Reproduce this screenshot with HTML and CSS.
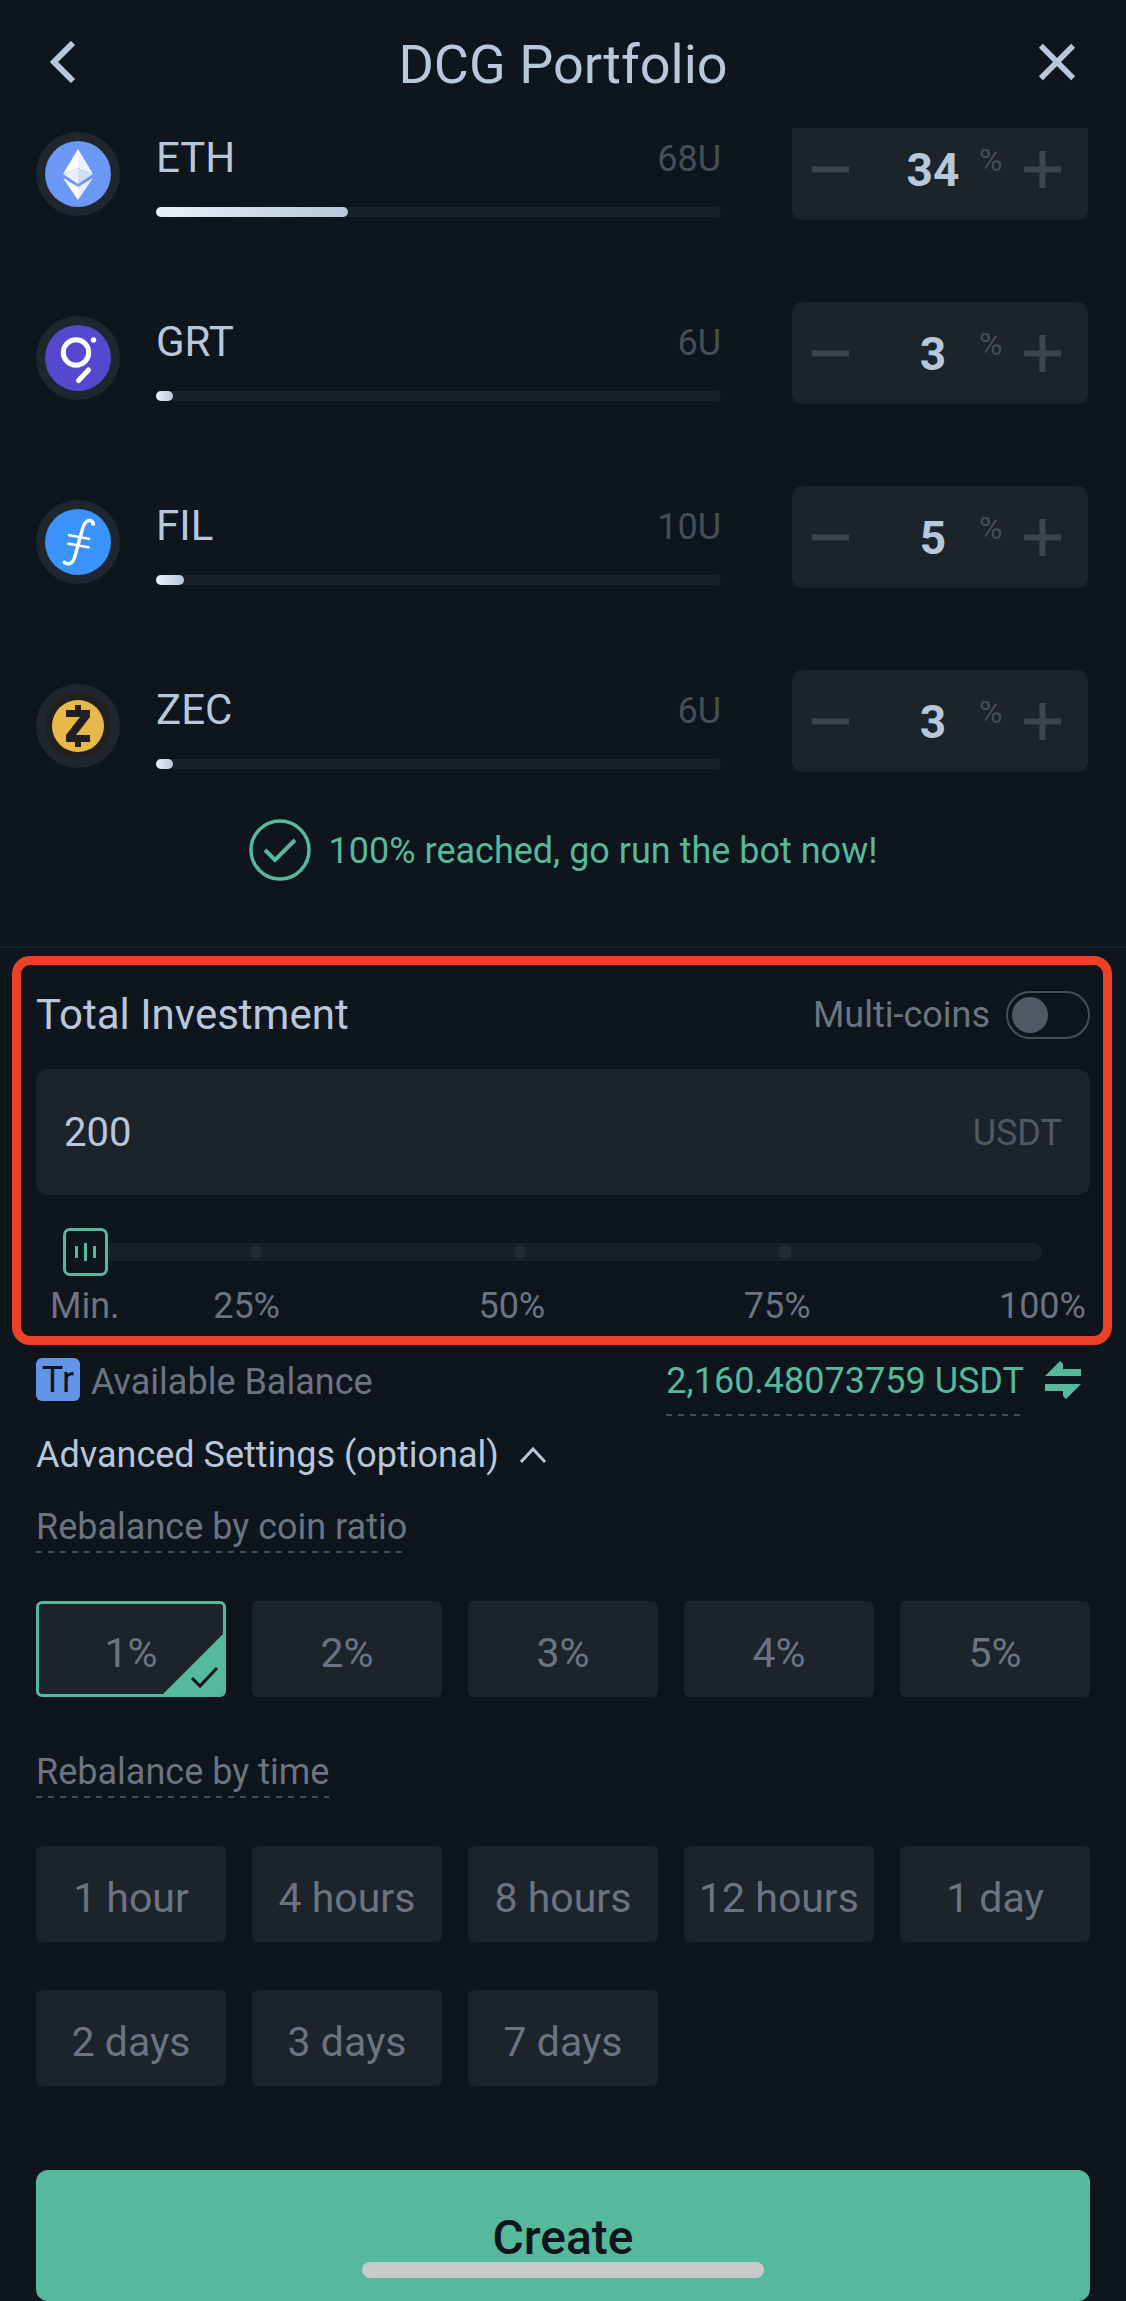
FILE: index.html
```html
<!DOCTYPE html>
<html lang="en">
<head>
  <meta charset="UTF-8" />
  <meta name="viewport" content="width=device-width, initial-scale=1.0"/>
  <title>DCG Portfolio</title>
  <link rel="stylesheet" href="styles.css">
</head>
<body>
  <header class="header">
    <button type="button" class="icon-btn" aria-label="Back">
      <svg width="26" height="42" viewBox="0 0 26 42"><path d="M23 2L4 21l19 19" fill="none" stroke="currentColor" stroke-width="6"/></svg>
    </button>
    <h1>DCG Portfolio</h1>
    <button type="button" class="icon-btn" aria-label="Close">
      <svg width="38" height="38" viewBox="0 0 40 40"><path d="M3 3l34 34M37 3L3 37" fill="none" stroke="currentColor" stroke-width="6"/></svg>
    </button>
  </header>

  <main>
    <div class="coins">
      <ul class="coin-list">
        <li class="coin">
          <svg class="coin-icon" viewBox="0 0 84 84">
            <circle cx="42" cy="42" r="42" fill="#20262d"/>
            <circle cx="42" cy="42" r="33" fill="#6b97f7"/>
            <path d="M42 17L27 42l15-6z" fill="#fff"/>
            <path d="M42 17l15 25-15-6z" fill="#eef2fc"/>
            <path d="M27 42l15-6v16z" fill="#e9effb"/>
            <path d="M57 42l-15-6v16z" fill="#d5deee"/>
            <path d="M27 46l15 9v13z" fill="#fff"/>
            <path d="M57 46l-15 9v13z" fill="#e9effb"/>
          </svg>
          <div class="coin-info">
            <div class="coin-text"><span class="coin-name">ETH</span><span class="coin-amount">68U</span></div>
            <div class="bar"><div class="bar-fill" style="width: 34%"></div></div>
          </div>
          <div class="stepper">
            <button type="button" class="minus" aria-label="Decrease ETH"><svg width="37" height="37" viewBox="0 0 37 37"><path d="M0 18.5h37" stroke="currentColor" stroke-width="6"/></svg></button>
            <input type="text" value="34" aria-label="ETH percent">
            <span class="unit">%</span>
            <button type="button" class="plus" aria-label="Increase ETH"><svg width="37" height="37" viewBox="0 0 37 37"><path d="M0 18.5h37M18.5 0v37" stroke="currentColor" stroke-width="6"/></svg></button>
          </div>
        </li>
        <li class="coin">
          <svg class="coin-icon" viewBox="0 0 84 84">
            <circle cx="42" cy="42" r="42" fill="#20262d"/>
            <circle cx="42" cy="42" r="33" fill="#5548ce"/>
            <circle cx="40" cy="36.500" r="12.700" fill="none" stroke="#fff" stroke-width="5"/>
            <circle cx="57.500" cy="24" r="2.700" fill="#fff"/>
            <path d="M52.500 54L42.500 64.500" stroke="#fff" stroke-width="5" stroke-linecap="round"/>
          </svg>
          <div class="coin-info">
            <div class="coin-text"><span class="coin-name">GRT</span><span class="coin-amount">6U</span></div>
            <div class="bar"><div class="bar-fill" style="width: 3%"></div></div>
          </div>
          <div class="stepper">
            <button type="button" class="minus" aria-label="Decrease GRT"><svg width="37" height="37" viewBox="0 0 37 37"><path d="M0 18.5h37" stroke="currentColor" stroke-width="6"/></svg></button>
            <input type="text" value="3" aria-label="GRT percent">
            <span class="unit">%</span>
            <button type="button" class="plus" aria-label="Increase GRT"><svg width="37" height="37" viewBox="0 0 37 37"><path d="M0 18.5h37M18.5 0v37" stroke="currentColor" stroke-width="6"/></svg></button>
          </div>
        </li>
        <li class="coin">
          <svg class="coin-icon" viewBox="0 0 84 84">
            <circle cx="42" cy="42" r="42" fill="#20262d"/>
            <circle cx="42" cy="42" r="33" fill="#3a93fa"/>
            <g fill="none" stroke="#fff" stroke-linecap="round">
              <path d="M57.500 24C56 18.500 49 19 46.500 29L39 56c-2 7.500-7 9.500-10.500 6.500" stroke-width="3.400"/>
              <path d="M32 35l22 4M31.500 43.500l22 4" stroke-width="2.600" stroke-linecap="butt"/>
            </g>
            <circle cx="57" cy="23.500" r="2" fill="#fff"/>
            <circle cx="28.500" cy="62.500" r="2" fill="#fff"/>
          </svg>
          <div class="coin-info">
            <div class="coin-text"><span class="coin-name">FIL</span><span class="coin-amount">10U</span></div>
            <div class="bar"><div class="bar-fill" style="width: 5%"></div></div>
          </div>
          <div class="stepper">
            <button type="button" class="minus" aria-label="Decrease FIL"><svg width="37" height="37" viewBox="0 0 37 37"><path d="M0 18.5h37" stroke="currentColor" stroke-width="6"/></svg></button>
            <input type="text" value="5" aria-label="FIL percent">
            <span class="unit">%</span>
            <button type="button" class="plus" aria-label="Increase FIL"><svg width="37" height="37" viewBox="0 0 37 37"><path d="M0 18.5h37M18.5 0v37" stroke="currentColor" stroke-width="6"/></svg></button>
          </div>
        </li>
        <li class="coin">
          <svg class="coin-icon" viewBox="0 0 84 84">
            <circle cx="42" cy="42" r="42" fill="#20262d"/>
            <circle cx="42" cy="42" r="33" fill="#221f20"/>
            <circle cx="42" cy="42" r="26" fill="#e9b84a"/>
            <path d="M39 21h6v5h9v7L40 51h14v7h-9v5h-6v-5h-9v-7l14-18H30v-7h9z" fill="#221f20"/>
          </svg>
          <div class="coin-info">
            <div class="coin-text"><span class="coin-name">ZEC</span><span class="coin-amount">6U</span></div>
            <div class="bar"><div class="bar-fill" style="width: 3%"></div></div>
          </div>
          <div class="stepper">
            <button type="button" class="minus" aria-label="Decrease ZEC"><svg width="37" height="37" viewBox="0 0 37 37"><path d="M0 18.5h37" stroke="currentColor" stroke-width="6"/></svg></button>
            <input type="text" value="3" aria-label="ZEC percent">
            <span class="unit">%</span>
            <button type="button" class="plus" aria-label="Increase ZEC"><svg width="37" height="37" viewBox="0 0 37 37"><path d="M0 18.5h37M18.5 0v37" stroke="currentColor" stroke-width="6"/></svg></button>
          </div>
        </li>
      </ul>
    </div>

    <div class="status">
      <svg width="62" height="62" viewBox="0 0 62 62" fill="none" stroke="currentColor">
        <circle cx="31" cy="31" r="29" stroke-width="3.500"/>
        <path d="M16 31l10 10 20-20" stroke-width="4"/>
      </svg>
      <span>100% reached, go run the bot now!</span>
    </div>

    <section class="invest">
      <div class="invest-head">
        <label for="amount">Total Investment</label>
        <label class="multi">Multi-coins <input type="checkbox" class="toggle"></label>
      </div>
      <div class="amount-box">
        <input type="text" id="amount" value="200">
        <span>USDT</span>
      </div>
      <input type="range" class="slider" min="0" max="100" value="0" aria-label="Share of balance">
      <div class="slider-labels">
        <span>Min.</span><span>25%</span><span>50%</span><span>75%</span><span>100%</span>
      </div>
    </section>

    <section class="settings">
      <div class="balance">
        <span class="badge">Tr</span>
        <span class="balance-label">Available Balance</span>
        <span class="balance-value dashed">2,160.48073759 USDT</span>
        <button type="button" class="swap" aria-label="Transfer">
          <svg width="36" height="38" viewBox="0 0 36 38" fill="currentColor"><path d="M0 15L15 0l3 3v5h18v7zM36 23L21 38l-3-3v-5H0v-7z"/></svg>
        </button>
      </div>

      <button type="button" class="advanced">Advanced Settings (optional)
        <svg width="28" height="18" viewBox="0 0 28 18"><path d="M2 16L14 3l12 13" fill="none" stroke="currentColor" stroke-width="3"/></svg>
      </button>

      <h2 class="dashed">Rebalance by coin ratio</h2>
      <div class="chips">
        <button type="button" class="chip selected" aria-pressed="true">1%
          <svg class="corner" width="60" height="60" viewBox="0 0 60 60"><path d="M60 0v60H0z" fill="#56b99b"/><path d="M29 44l8 8 17-18" fill="none" stroke="#0e151c" stroke-width="3"/></svg>
        </button>
        <button type="button" class="chip">2%</button>
        <button type="button" class="chip">3%</button>
        <button type="button" class="chip">4%</button>
        <button type="button" class="chip">5%</button>
      </div>

      <h2 class="dashed by-time">Rebalance by time</h2>
      <div class="chips">
        <button type="button" class="chip">1 hour</button>
        <button type="button" class="chip">4 hours</button>
        <button type="button" class="chip">8 hours</button>
        <button type="button" class="chip">12 hours</button>
        <button type="button" class="chip">1 day</button>
        <button type="button" class="chip">2 days</button>
        <button type="button" class="chip">3 days</button>
        <button type="button" class="chip">7 days</button>
      </div>

      <button type="submit" class="create">Create</button>
    </section>
  </main>
  <div class="home-bar"></div>
</body>
</html>
```
FILE: styles.css
```css
* { box-sizing: border-box; }
body { margin: 0; background: #0e151c; color: #b9c7da; font-family: Roboto, sans-serif; font-size: 36px; line-height: 44px; }
button, input { font: inherit; color: inherit; background: none; border: 0; padding: 0; margin: 0; }
button { cursor: pointer; }
svg { display: block; flex: none; }
h1, h2, ul { margin: 0; padding: 0; font-weight: 400; }

.header { display: flex; align-items: center; justify-content: space-between; height: 128px; padding: 0 50px; }
.header h1 { padding-top: 2px; font-size: 54px; line-height: 60px; }
.icon-btn { width: 38px; padding-bottom: 4px; }

/* coins */
.coins { overflow: hidden; }
.coin-list { display: grid; gap: 82px; margin-top: -10px; list-style: none; }
.coin { display: grid; grid-template-columns: 84px 1fr 296px; height: 102px; padding: 0 38px 0 36px; }
.coin-icon, .coin-info { margin-top: 14px; }
.coin-icon { width: 84px; height: 84px; }
.coin-info { padding: 0 71px 0 36px; }
.coin-text { display: flex; justify-content: space-between; padding-top: 2px; margin-bottom: 25px; line-height: 48px; }
.coin-name { font-size: 42px; }
.coin-amount { padding-top: 2px; line-height: 46px; color: #464e57; }
.bar { height: 10px; border-radius: 5px; background: #192028; }
.bar-fill { height: 10px; border-radius: 5px; background: linear-gradient(90deg, #eaf0f7, #b9c7da); }
.stepper { display: flex; align-items: center; border-radius: 10px; background: #1c232b; color: #3d464f; }
.stepper input { flex: 1; min-width: 0; padding-top: 2px; color: #b9c7da; font-size: 46px; font-weight: 700; text-align: center; }
.stepper .minus { width: 95px; padding-left: 20px; }
.stepper .plus { width: 85px; padding-left: 21px; }
.unit { width: 24px; padding-bottom: 18px; font-size: 32px; color: #464e57; }

.status { display: flex; align-items: center; justify-content: center; gap: 18px; padding: 47px 0 65px; border-bottom: 2px solid #192028; color: #56b99b; }
.status span { padding-top: 2px; }

/* total investment */
.invest { margin: 8px 14px 0 12px; padding: 26px 13px 10px 15px; border: 9px solid #ec4126; border-radius: 18px; }
.invest-head { display: flex; align-items: center; justify-content: space-between; height: 48px; font-size: 42px; }
.multi { display: flex; align-items: center; gap: 16px; font-size: 36px; color: #6b7480; }
.toggle { appearance: none; width: 84px; height: 48px; padding: 4px; border: 2px solid #464e57; border-radius: 24px; }
.toggle::before { content: ""; display: block; width: 36px; height: 36px; border-radius: 50%; background: #505a64; }
.toggle:checked::before { margin-left: auto; background: #56b99b; }
.amount-box { display: flex; align-items: center; height: 126px; margin: 30px 0 33px; padding: 2px 28px 0; border-radius: 12px; background: #1c232b; color: #505863; }
.amount-box input { flex: 1; min-width: 0; font-size: 40px; color: #b9c7da; }
.slider { appearance: none; display: block; width: calc(100% - 75px); height: 48px; margin-left: 27px; }
.slider::-webkit-slider-runnable-track {
  height: 18px; border-radius: 9px; background: #192028;
  background-image:
    radial-gradient(circle at 19.7% 50%, #232a32 6px, transparent 7px),
    radial-gradient(circle at 46.7% 50%, #232a32 6px, transparent 7px),
    radial-gradient(circle at 73.7% 50%, #232a32 6px, transparent 7px);
}
.slider::-webkit-slider-thumb {
  appearance: none; width: 45px; height: 48px; margin-top: -15px; border: 3px solid #56b99b; border-radius: 7px;
  background:
    linear-gradient(#56b99b, #56b99b) 9px 50% / 3px 12px no-repeat,
    linear-gradient(#56b99b, #56b99b) 18px 50% / 3px 18px no-repeat,
    linear-gradient(#56b99b, #56b99b) 27px 50% / 3px 12px no-repeat,
    #0e151c;
}
.slider-labels { display: grid; grid-template-columns: 163fr 265fr 265fr 255fr auto; margin-top: 10px; padding: 0 4px 0 14px; line-height: 40px; color: #6b7480; }

/* balance and advanced settings */
.settings { padding: 13px 36px 0; }
.balance { display: flex; align-items: flex-start; color: #6b7480; }
.badge { width: 44px; height: 43px; border-radius: 6px; background: #6294e8; color: #0e151c; text-align: center; }
.balance-label { margin: 2px auto 0 11px; }
.dashed { width: fit-content; padding-bottom: 4px; background: repeating-linear-gradient(90deg, #464e57 0 6px, transparent 6px 12px) left bottom / 100% 2px no-repeat; }
.balance-value { padding: 1px 0 13px; color: #56b99b; }
.swap { margin: 3px 9px 0 21px; color: #56b99b; }
.advanced { display: flex; align-items: center; gap: 20px; margin: 17px 0 28px; }
.settings h2 { margin-bottom: 48px; font-size: 36px; color: #6b7480; }
.settings .by-time { margin-top: 53px; }
.chips { display: grid; grid-template-columns: repeat(5, 1fr); gap: 48px 26px; }
.chip { position: relative; height: 96px; padding-top: 8px; border-radius: 6px; background: #1c232b; color: #6b7480; font-size: 41px; white-space: nowrap; overflow: hidden; }
.selected { border: 3px solid #56b99b; }
.corner { position: absolute; right: 0; bottom: 0; }
.create { width: 100%; height: 131px; margin-top: 84px; padding-top: 4px; border-radius: 12px; background: #56b99b; color: #0e151c; font-size: 48px; font-weight: 500; }

.home-bar { position: fixed; bottom: 23px; left: 50%; width: 402px; height: 16px; margin-left: -201px; border-radius: 8px; background: #c8cacb; }
```
